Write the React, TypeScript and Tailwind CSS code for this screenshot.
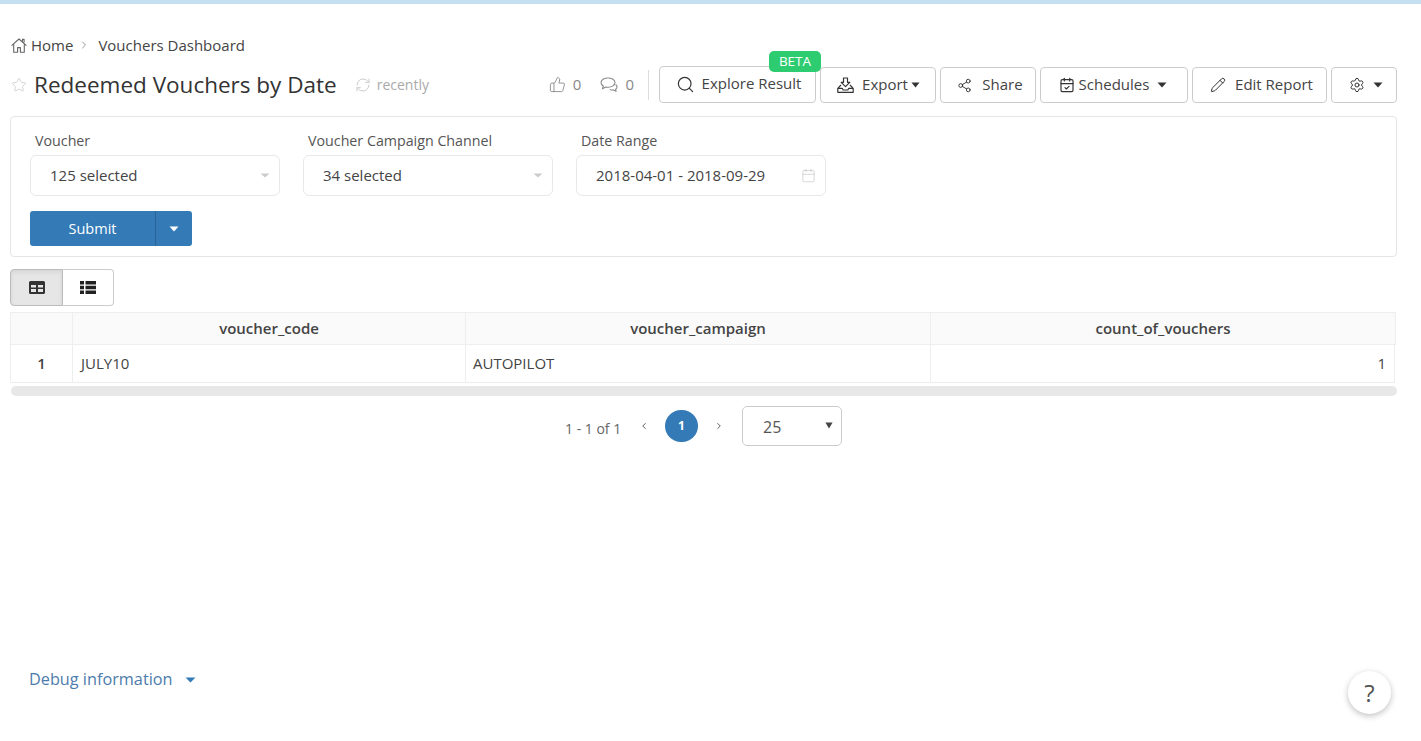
import { Calendar, CalendarCheck, Pencil, RefreshCw, Search, Settings, Share2, Star, ThumbsUp, ChevronRight, ChevronLeft } from 'lucide-react';
import type { ReactNode } from 'react';

function Caret({ className }: { className: string }) {
  return (
    <svg viewBox="0 0 10 6" preserveAspectRatio="none" className={className} fill="currentColor">
      <path d="M0.5 0.5h9L5 5.5z" />
    </svg>
  );
}

function HomeIcon() {
  return (
    <svg viewBox="0 0 16 15" className="ml-[1px] h-[15px] w-[16px] text-[#666]" fill="none" stroke="currentColor" strokeWidth={1.1} strokeLinejoin="round">
      <path d="M0.6 7.6 8 1l7.4 6.6M2.7 6.4v7.9h3.9V9.6h2.8v4.7h3.9V6.4M11.5 3.2V1.4h1.6v3.2" />
    </svg>
  );
}

function CommentIcon() {
  return (
    <svg viewBox="0 0 18 15" className="ml-[19px] h-[15px] w-[18px]" fill="none" stroke="currentColor" strokeWidth={1.1} strokeLinejoin="round">
      <path d="M8 1c3.9 0 7 2 7 4.6S11.9 10.2 8 10.2c-.8 0-1.600-.1-2.300-.2L2.500 11.800l.8-2.800C1.800 8.100 1 6.900 1 5.600 1 3 4.100 1 8 1z" />
      <path d="M15.600 7.500c.9.700 1.400 1.500 1.400 2.400 0 .9-.5 1.700-1.400 2.300l.5 2-2.700-1.300c-1.300.2-2.500 0-3.600-.5" />
    </svg>
  );
}

function ExportIcon() {
  return (
    <svg viewBox="0 0 17 16" className="h-[16px] w-[17px] text-[#333]" fill="none" stroke="currentColor" strokeWidth={1.2} strokeLinejoin="round">
      <path d="M6.500 1h4v4.300h2.300L8.500 9.600 4.200 5.300h2.300z" />
      <path d="M4 8 .8 11.300v4h15.400v-4L13 8M.8 11.300h4.400l1 1.700h4.600l1-1.700h4.400" />
    </svg>
  );
}

function ToolButton({ size, children }: { size: string; children: ReactNode }) {
  return (
    <button type="button" className={`flex items-center justify-center rounded-[4px] border border-[#ccc] bg-white text-[15px] text-[#444] ${size}`}>
      {children}
    </button>
  );
}

function Filter({ label, value, icon }: { label: string; value: string; icon: ReactNode }) {
  return (
    <div className="w-[250px]">
      <div className="pl-[5px] text-[14.25px] leading-[20px] font-[500] text-[#555]">{label}</div>
      <div className="mt-[4px] flex h-[41px] items-center justify-between rounded-[6px] border border-[#e8e8e8] pr-[9px] pl-[19px] text-[15px] text-[#444]">
        <span>{value}</span>
        {icon}
      </div>
    </div>
  );
}

export default function App() {
  return (
    <div className="relative h-[741px] overflow-hidden bg-white font-['Open_Sans',sans-serif] text-[#444]">
      <div className="h-[4px] bg-[#c3dff0]" />
      <div className="pt-[30px] pr-[24px] pl-[10px]">
        <div className="flex h-[22px] items-center text-[15px] text-[#444]">
          <HomeIcon />
          <span className="ml-[4px]">Home</span>
          <ChevronRight className="ml-[5px] h-[12px] w-[12px] text-[#777]" strokeWidth={1.5} />
          <span className="ml-[8px]">Vouchers Dashboard</span>
        </div>

        <div className="mt-[10px] flex h-[37px] items-center">
          <Star className="ml-[1px] h-[16px] w-[16px] text-[#ccc]" strokeWidth={1.25} />
          <h1 className="ml-[7px] text-[22.5px] font-normal text-[#333]">Redeemed Vouchers by Date</h1>
          <RefreshCw className="ml-[18px] h-[16px] w-[16px] text-[#ccc]" strokeWidth={1.5} />
          <span className="ml-[6px] text-[14px] text-[#aaa]">recently</span>

          <div className="ml-auto flex items-center text-[15px] text-[#888]">
            <ThumbsUp className="h-[17px] w-[17px]" strokeWidth={1.25} />
            <span className="ml-[7px]">0</span>
            <CommentIcon />
            <span className="ml-[7px]">0</span>
            <div className="mr-[10px] ml-[14px] h-[30px] w-px bg-[#ddd]" />
          </div>

          <div className="flex items-end gap-[4px]">
            <div className="relative">
              <ToolButton size="h-[37px] w-[157px] pl-[2px]">
                <Search className="h-[19px] w-[19px] text-[#333]" strokeWidth={1.5} />
                <span className="ml-[7px] pb-[2px]">Explore Result</span>
              </ToolButton>
              <span className="absolute top-[-15px] right-[-5px] flex h-[21px] w-[52px] items-center justify-center rounded-[5px] bg-[#2ecc71] text-[13.5px] text-white">BETA</span>
            </div>
            <ToolButton size="h-[36px] w-[116px] pl-[1px]">
              <ExportIcon />
              <span className="ml-[8px] pb-[1px]">Export</span>
              <Caret className="ml-[3px] h-[6px] w-[9px] text-[#333]" />
            </ToolButton>
            <ToolButton size="h-[36px] w-[96px] pl-[4px]">
              <Share2 className="h-[15px] w-[15px] text-[#333]" strokeWidth={1.5} />
              <span className="ml-[10px] pb-[1px]">Share</span>
            </ToolButton>
            <ToolButton size="h-[36px] w-[148px] pr-[2px]">
              <CalendarCheck className="h-[16px] w-[16px] text-[#333]" strokeWidth={1.75} />
              <span className="ml-[4px] pb-[1px]">Schedules</span>
              <Caret className="ml-[8px] h-[6px] w-[10px] text-[#333]" />
            </ToolButton>
            <ToolButton size="h-[36px] w-[135px] pl-[4px]">
              <Pencil className="h-[16px] w-[16px] text-[#333]" strokeWidth={1.5} />
              <span className="ml-[9px] pb-[1px]">Edit Report</span>
            </ToolButton>
            <ToolButton size="h-[36px] w-[66px] pl-[3px]">
              <Settings className="h-[16px] w-[16px] text-[#333]" strokeWidth={1.5} />
              <Caret className="ml-[8px] h-[6px] w-[10px] text-[#333]" />
            </ToolButton>
          </div>
        </div>

        <section className="mt-[13px] h-[141px] rounded-[4px] border border-[#e6e6e6] pt-[14px] pl-[19px]">
          <div className="flex gap-[23px]">
            <Filter label="Voucher" value="125 selected" icon={<Caret className="h-[5px] w-[10px] text-[#ccc]" />} />
            <Filter label="Voucher Campaign Channel" value="34 selected" icon={<Caret className="h-[5px] w-[10px] text-[#ccc]" />} />
            <Filter label="Date Range" value="2018-04-01 - 2018-09-29" icon={<Calendar className="h-[15px] w-[15px] text-[#ccc]" strokeWidth={1.25} />} />
          </div>
          <div className="mt-[15px] flex h-[35px] w-[162px] overflow-hidden rounded-[3px] bg-[#337ab7] text-white">
            <div className="flex w-[126px] items-center justify-center border-r border-[#2a6496] text-[14.5px]">Submit</div>
            <div className="flex flex-1 items-center justify-center">
              <Caret className="h-[6px] w-[10px]" />
            </div>
          </div>
        </section>

        <div className="mt-[12px] flex h-[37px] w-[104px]">
          <div className="flex w-[53px] items-center justify-center rounded-l-[4px] border border-[#bbb] bg-[#e6e6e6] shadow-[inset_0_2px_4px_rgba(0,0,0,0.08)]">
            <svg viewBox="0 0 16 13" className="h-[13px] w-[16px]" fill="#333">
              <path fillRule="evenodd" d="M1.5 0h13A1.5 1.5 0 0 1 16 1.5v10a1.5 1.5 0 0 1-1.5 1.5h-13A1.5 1.5 0 0 1 0 11.5v-10A1.5 1.5 0 0 1 1.5 0zM2 4v2.5h5V4zm7 0v2.5h5V4zM2 8v3h5V8zm7 0v3h5V8z" />
            </svg>
          </div>
          <div className="flex flex-1 items-center justify-center rounded-r-[4px] border border-l-0 border-[#ccc]">
            <svg viewBox="0 0 16 13" className="h-[13px] w-[16px]" fill="#222">
              <path d="M0 0h4v3.5H0zM5.500 0H16v3.500H5.500zM0 4.700h4v3.600H0zM5.500 4.700H16v3.600H5.500zM0 9.500h4V13H0zM5.500 9.500H16V13H5.500z" />
            </svg>
          </div>
        </div>

        <div className="mt-[6px] text-[15px]">
          <div className="grid h-[33px] w-[1386px] grid-cols-[62px_393px_465px_1fr] border border-[#eee] bg-[#fafafa] font-semibold text-[#444]">
            <div className="border-r border-[#eee]" />
            <div className="flex items-center justify-center border-r border-[#eee]">voucher_code</div>
            <div className="flex items-center justify-center border-r border-[#eee]">voucher_campaign</div>
            <div className="flex items-center justify-center">count_of_vouchers</div>
          </div>
          <div className="grid h-[38px] w-[1385px] grid-cols-[62px_393px_465px_1fr] border-x border-b border-[#eee] text-[#444]">
            <div className="flex items-center justify-center border-r border-[#eee] font-semibold">1</div>
            <div className="flex items-center border-r border-[#eee] pl-[8px]">JULY10</div>
            <div className="flex items-center border-r border-[#eee] pl-[7px]">AUTOPILOT</div>
            <div className="flex items-center justify-end pr-[8px]">1</div>
          </div>
        </div>
        <div className="mt-[3px] ml-[1px] h-[10px] w-[1386px] rounded-full bg-[#e8e8e8]" />

        <div className="mt-[10px] flex h-[40px] items-center pl-[555px] text-[#555]">
          <span className="mt-[5px] w-[66px] text-[14px] text-[#666]">1 - 1 of 1</span>
          <ChevronLeft className="ml-[8px] h-[10px] w-[10px]" strokeWidth={2.25} />
          <span className="ml-[16px] flex h-[32px] w-[33px] items-center justify-center rounded-full bg-[#337ab7] text-[12px] font-bold text-white">1</span>
          <ChevronRight className="ml-[16px] h-[10px] w-[10px]" strokeWidth={2.25} />
          <div className="ml-[18px] flex h-[40px] w-[100px] items-center justify-between rounded-[5px] border border-[#ccc] pr-[8px] pl-[20px] text-[16px] text-[#555]">
            <span className="pt-[1px]">25</span>
            <Caret className="mb-[1px] h-[7px] w-[8px] text-[#444]" />
          </div>
        </div>

        <div className="mt-[221px] flex items-center pl-[19px] text-[16.25px] text-[#4d7cac]">
          <span>Debug information</span>
          <Caret className="mt-[2px] ml-[12px] h-[6px] w-[11px] text-[#337ab7]" />
        </div>
      </div>

      <button type="button" className="absolute top-[671px] left-[1348px] flex h-[43px] w-[43px] items-center justify-center rounded-full bg-white text-[24px] text-[#555] shadow-[0_2px_6px_rgba(0,0,0,0.25)]">?</button>
    </div>
  );
}
